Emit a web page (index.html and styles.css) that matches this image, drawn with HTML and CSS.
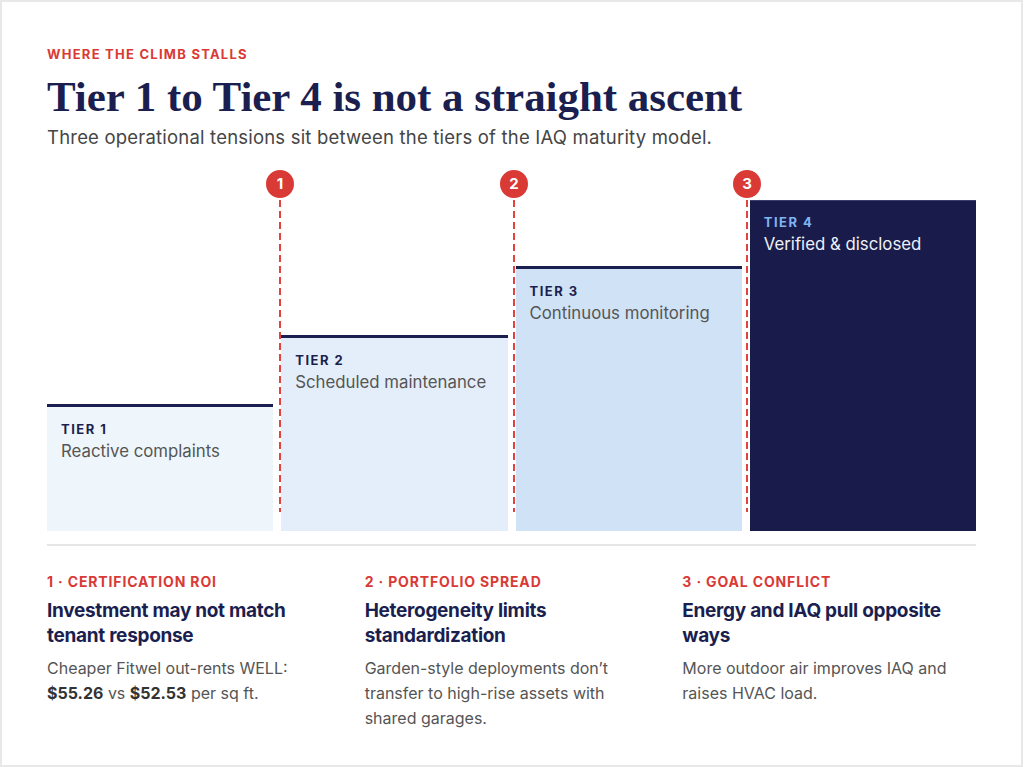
FILE: index.html
```html
<!DOCTYPE html>
<html lang="en">
<head>
<meta charset="utf-8">
<title>Where the climb stalls</title>
<link rel="stylesheet" href="styles.css">
</head>
<body>
<div class="page">
  <header class="head">
    <div class="eyebrow">WHERE THE CLIMB STALLS</div>
    <h1 class="title">Tier 1 to Tier 4 is not a straight ascent</h1>
    <p class="subtitle">Three operational tensions sit between the tiers of the IAQ maturity model.</p>
  </header>

  <section class="chart">
    <div class="tier t1">
      <div class="tier-label">TIER 1</div>
      <div class="tier-desc">Reactive complaints</div>
    </div>
    <div class="tier t2">
      <div class="tier-label">TIER 2</div>
      <div class="tier-desc">Scheduled maintenance</div>
    </div>
    <div class="tier t3">
      <div class="tier-label">TIER 3</div>
      <div class="tier-desc">Continuous monitoring</div>
    </div>
    <div class="tier t4">
      <div class="tier-label">TIER 4</div>
      <div class="tier-desc">Verified &amp; disclosed</div>
    </div>

    <div class="marker m1"><span class="dot">1</span><span class="dash"></span></div>
    <div class="marker m2"><span class="dot">2</span><span class="dash"></span></div>
    <div class="marker m3"><span class="dot">3</span><span class="dash"></span></div>
  </section>

  <hr class="rule">

  <section class="notes">
    <div class="note">
      <div class="note-kicker">1 · CERTIFICATION ROI</div>
      <h2 class="note-title">Investment may not match tenant response</h2>
      <p class="note-body">Cheaper Fitwel out-rents WELL: <b>$55.26</b> vs <b>$52.53</b> per sq ft.</p>
    </div>
    <div class="note">
      <div class="note-kicker">2 · PORTFOLIO SPREAD</div>
      <h2 class="note-title">Heterogeneity limits standardization</h2>
      <p class="note-body">Garden-style deployments don’t transfer to high-rise assets with shared garages.</p>
    </div>
    <div class="note">
      <div class="note-kicker">3 · GOAL CONFLICT</div>
      <h2 class="note-title">Energy and IAQ pull opposite ways</h2>
      <p class="note-body">More outdoor air improves IAQ and raises HVAC load.</p>
    </div>
  </section>
</div>
</body>
</html>
```

FILE: styles.css
```css
* { box-sizing: border-box; }
html, body { margin: 0; padding: 0; background: #ffffff; }
body { font-family: Inter, Roboto, "Liberation Sans", Arial, sans-serif; color: #1b1f4f; }

.page {
  width: 1023px;
  height: 767px;
  border: 2px solid #e8e8e8;
  padding: 44px 45px 0 45px;
  background: #fff;
}

.eyebrow {
  font-size: 13px;
  line-height: 16px;
  font-weight: 700;
  letter-spacing: 1.25px;
  color: #d93a35;
}
.title {
  margin: 13px 0 0 0;
  font-family: "Liberation Serif", "Times New Roman", serif;
  font-weight: 700;
  font-size: 43px;
  line-height: 44px;
  letter-spacing: -0.05px;
  color: #1b1f4f;
}
.subtitle {
  margin: 6px 0 0 0;
  font-size: 18.5px;
  line-height: 24px;
  letter-spacing: 0.2px;
  color: #454545;
}

.chart {
  position: relative;
  margin-top: 19px;
  height: 363px;
  display: flex;
  align-items: flex-end;
  gap: 8px;
}
.tier {
  flex: 1 1 0;
  padding: 13px 14px;
  border-top: 3px solid #1b1f4f;
}
.t1 { height: 127px; background: #eef6fb; }
.t2 { height: 196px; background: #e3eefa; }
.t3 { height: 265px; background: #cfe2f6; }
.t4 { height: 331px; background: #191c4a; border-top: 1px solid #3b3f6c; padding-top: 12px; }

.tier-label {
  font-size: 13px;
  line-height: 18px;
  font-weight: 700;
  letter-spacing: 1.5px;
  color: #1b1f4f;
}
.tier-desc {
  margin-top: 2px;
  font-size: 16.8px;
  line-height: 22px;
  color: #555555;
}
.t4 .tier-label { color: #80b4f2; }
.t4 .tier-desc { color: #eef0f8; }

.marker {
  position: absolute;
  top: 0;
  width: 32px;
  margin-left: -16px;
  display: flex;
  flex-direction: column;
  align-items: center;
}
.m1 { left: 233px; }
.m2 { left: 467px; }
.m3 { left: 700px; }
.dot {
  width: 32px;
  height: 32px;
  border-radius: 50%;
  background: #d93a35;
  border: 2px solid #ffffff;
  color: #fff;
  font-weight: 700;
  font-size: 15px;
  line-height: 28px;
  text-align: center;
}
.dash {
  width: 2px;
  height: 312px;
  background: repeating-linear-gradient(to bottom, #e2443d 0 7px, transparent 7px 11px);
}

.rule {
  margin: 13px 0 0 0;
  border: 0;
  height: 2px;
  background: #e6e6e6;
}

.notes {
  display: grid;
  grid-template-columns: repeat(3, 1fr);
  column-gap: 24px;
  margin-top: 27px;
}
.note-kicker {
  font-size: 14px;
  line-height: 18px;
  font-weight: 700;
  letter-spacing: 0.85px;
  color: #d93a35;
}
.note-title {
  margin: 7px 0 0 0;
  font-size: 19px;
  line-height: 25px;
  font-weight: 700;
  letter-spacing: -0.3px;
  color: #1b1f4f;
}
.note-body {
  margin: 8px 0 0 0;
  font-size: 16px;
  line-height: 25px;
  color: #555555;
}
.note-body b { color: #333333; font-weight: 700; }
```
